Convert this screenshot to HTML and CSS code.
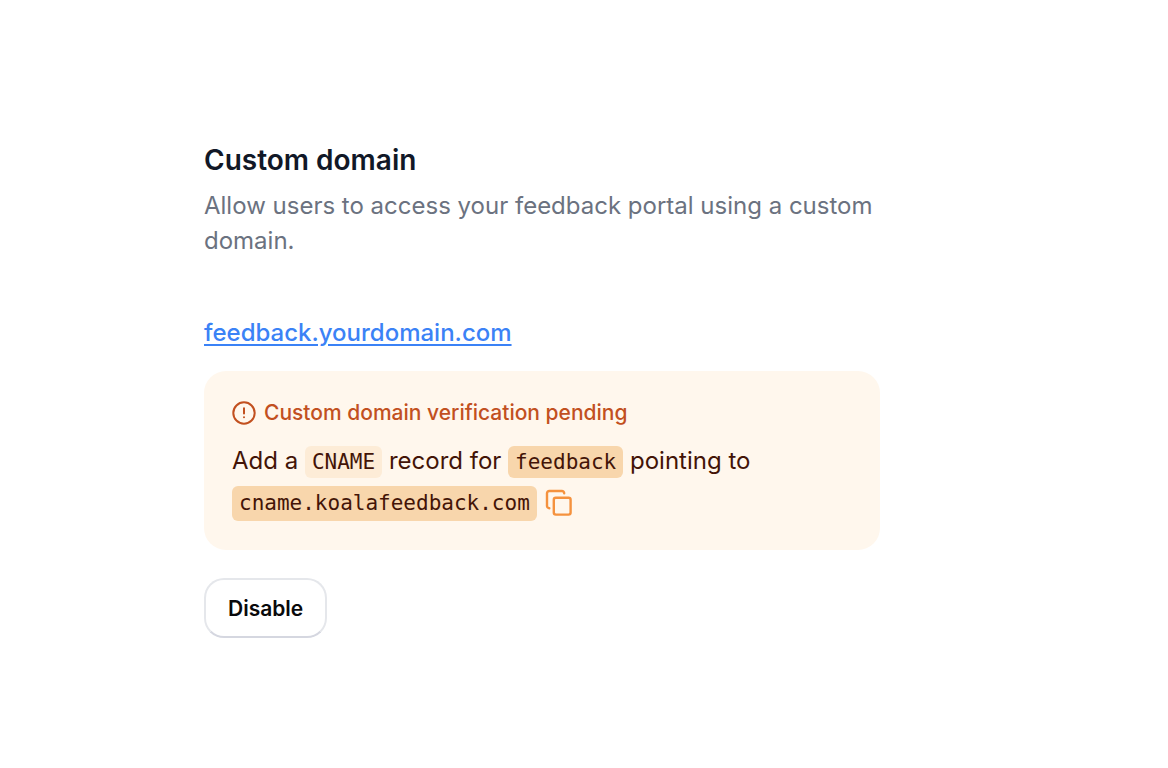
FILE: index.html
```html
<!DOCTYPE html>
<html lang="en">
<head>
  <meta charset="UTF-8">
  <meta name="viewport" content="width=device-width, initial-scale=1.0">
  <title>Custom domain</title>
  <link rel="stylesheet" href="styles.css">
</head>
<body>
  <main class="settings">
    <h1 class="title">Custom domain</h1>
    <p class="description">Allow users to access your feedback portal using a custom domain.</p>

    <a class="domain-link" href="#">feedback.yourdomain.com</a>

    <section class="notice">
      <h2 class="notice-title">
        <svg class="notice-icon" viewBox="0 0 24 24" aria-hidden="true">
          <circle cx="12" cy="12" r="10.7"/>
          <path d="M12 7.2v5.2M12 16.2v.1"/>
        </svg>
        Custom domain verification pending
      </h2>
      <p class="notice-text">
        Add a <code class="record">CNAME</code> record for <code>feedback</code> pointing to
        <span class="target"><code>cname.koalafeedback.com</code><button class="copy" type="button" aria-label="Copy">
          <svg viewBox="0 0 28 28" aria-hidden="true">
            <rect x="8.8" y="8.8" width="16.8" height="16.8" rx="2"/>
            <path d="M4.3 19.2a2.3 2.3 0 0 1-2.3-2.3V4.3A2.3 2.3 0 0 1 4.3 2h12.6a2.3 2.3 0 0 1 2.3 2.3"/>
          </svg>
        </button></span>
      </p>
    </section>

    <button class="disable" type="button">Disable</button>
  </main>
</body>
</html>
```
FILE: styles.css
```css
* {
    margin: 0;
    padding: 0;
    box-sizing: border-box;
}

body {
    font-family: Inter, "Liberation Sans", sans-serif;
    background: #fff;
    color: #111827;
}

.settings {
    max-width: 676px;
    margin: 142px 288px 40px 204px;
}

.title {
    font-size: 28px;
    font-weight: 600;
    line-height: 36px;
}

.description {
    margin-top: 10px;
    font-size: 24px;
    line-height: 35px;
    color: #6b7280;
}

.domain-link {
    display: inline-block;
    margin-top: 57px;
    font-size: 24px;
    font-weight: 500;
    line-height: 36px;
    color: #3b82f6;
    text-decoration-thickness: 2px;
    text-underline-offset: 3px;
}

.notice {
    margin-top: 20px;
    padding: 28px;
    border-radius: 22px;
    background: #fff7ed;
}

.notice-title {
    display: flex;
    align-items: center;
    gap: 8px;
    font-size: 21px;
    font-weight: 500;
    line-height: 28px;
    color: #c2501f;
}

.notice-icon {
    width: 24px;
    height: 24px;
    fill: none;
    stroke: currentColor;
    stroke-width: 2;
    stroke-linecap: round;
}

.notice-text {
    margin-top: 14px;
    font-size: 24px;
    line-height: 40px;
    color: #431407;
}

code {
    padding: 4px 7px;
    border-radius: 6px;
    background: #f8d6ac;
    font-family: "DejaVu Sans Mono", monospace;
    font-size: 21px;
}

.record {
    background: #fdecd7;
}

.target {
    display: inline-flex;
    align-items: center;
    gap: 8px;
    vertical-align: middle;
}

.target code {
    line-height: 27px;
}

.copy {
    display: flex;
    border: none;
    background: none;
    color: #f5923e;
    cursor: pointer;
}

.copy svg {
    width: 28px;
    height: 28px;
    fill: none;
    stroke: currentColor;
    stroke-width: 2.4;
    stroke-linecap: round;
}

.disable {
    margin-top: 28px;
    padding: 0 22px;
    height: 60px;
    border: 2px solid #e5e7eb;
    border-bottom-color: #d5d7e0;
    border-radius: 20px;
    background: #fff;
    font-family: inherit;
    font-size: 21px;
    font-weight: 600;
    color: #09090b;
    cursor: pointer;
}
```
